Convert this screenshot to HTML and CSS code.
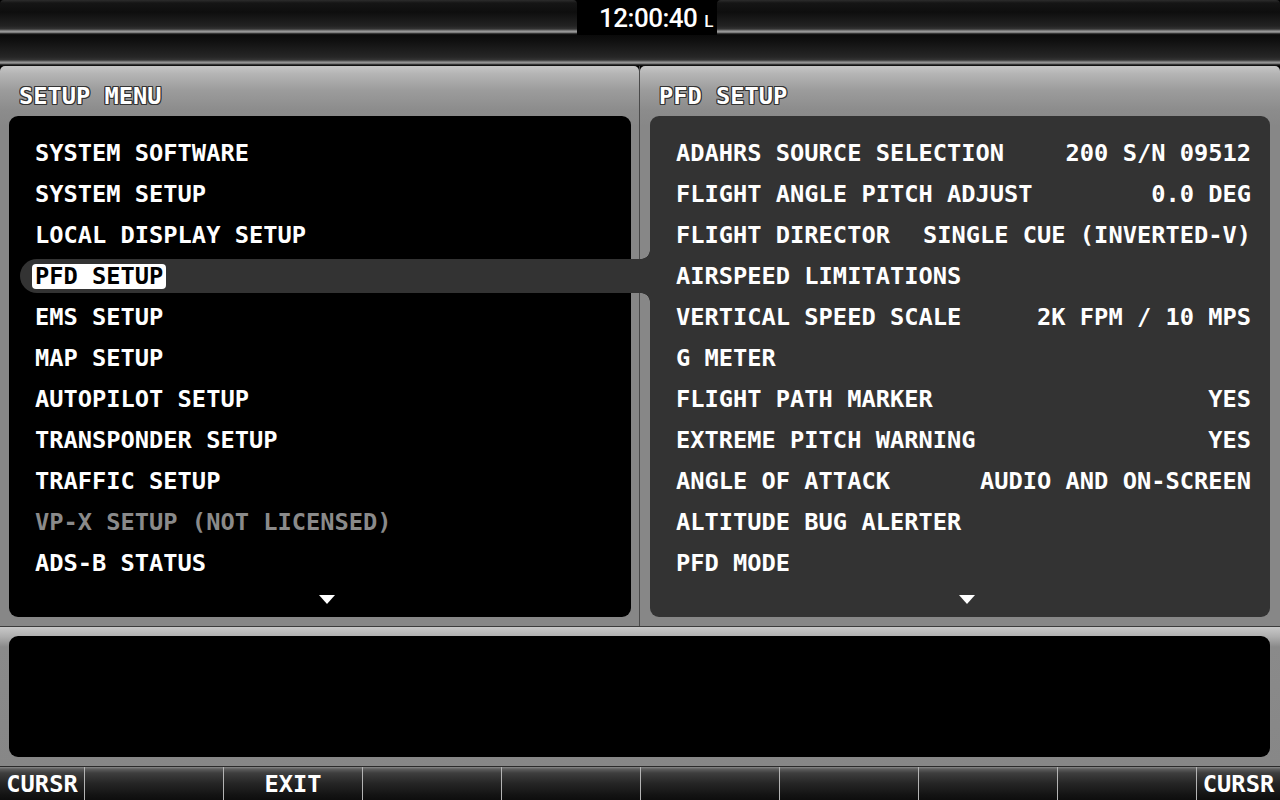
FILE: index.html
```html
<!DOCTYPE html>
<html lang="en">
<head>
    <meta charset="UTF-8">
    <meta name="viewport" content="width=device-width, initial-scale=1.0">
    <link rel="stylesheet" href="styles.css">
    <title>Setup Menu</title>
</head>
<body>
    <div class="screen">
        <div class="top-bar">
            <div class="bar-fill bar-left"></div>
            <div class="clock">12:00:40<span class="clock-zone">L</span></div>
            <div class="bar-fill"></div>
        </div>
        <div class="sub-bar"></div>

        <div class="panels">
            <div class="panel panel-left">
                <div class="panel-title">SETUP MENU</div>
                <div class="panel-body menu-list">
                    <div class="row"><span class="label">SYSTEM SOFTWARE</span></div>
                    <div class="row"><span class="label">SYSTEM SETUP</span></div>
                    <div class="row"><span class="label">LOCAL DISPLAY SETUP</span></div>
                    <div class="row selected"><span class="label">PFD SETUP</span></div>
                    <div class="row"><span class="label">EMS SETUP</span></div>
                    <div class="row"><span class="label">MAP SETUP</span></div>
                    <div class="row"><span class="label">AUTOPILOT SETUP</span></div>
                    <div class="row"><span class="label">TRANSPONDER SETUP</span></div>
                    <div class="row"><span class="label">TRAFFIC SETUP</span></div>
                    <div class="row disabled"><span class="label">VP-X SETUP (NOT LICENSED)</span></div>
                    <div class="row"><span class="label">ADS-B STATUS</span></div>
                    <div class="more"><span class="arrow-down"></span></div>
                </div>
            </div>
            <div class="divider"></div>
            <div class="panel panel-right">
                <div class="panel-title">PFD SETUP</div>
                <div class="panel-body settings-list">
                    <div class="row setting"><span>ADAHRS SOURCE SELECTION</span><span>200 S/N 09512</span></div>
                    <div class="row setting"><span>FLIGHT ANGLE PITCH ADJUST</span><span>0.0 DEG</span></div>
                    <div class="row setting"><span>FLIGHT DIRECTOR</span><span>SINGLE CUE (INVERTED-V)</span></div>
                    <div class="row setting"><span>AIRSPEED LIMITATIONS</span><span></span></div>
                    <div class="row setting"><span>VERTICAL SPEED SCALE</span><span>2K FPM / 10 MPS</span></div>
                    <div class="row setting"><span>G METER</span><span></span></div>
                    <div class="row setting"><span>FLIGHT PATH MARKER</span><span>YES</span></div>
                    <div class="row setting"><span>EXTREME PITCH WARNING</span><span>YES</span></div>
                    <div class="row setting"><span>ANGLE OF ATTACK</span><span>AUDIO AND ON-SCREEN</span></div>
                    <div class="row setting"><span>ALTITUDE BUG ALERTER</span><span></span></div>
                    <div class="row setting"><span>PFD MODE</span><span></span></div>
                    <div class="more"><span class="arrow-down"></span></div>
                </div>
            </div>
        </div>

        <div class="message-area">
            <div class="message-box"></div>
        </div>

        <div class="softkeys">
            <div class="key">CURSR</div>
            <div class="key"></div>
            <div class="key">EXIT</div>
            <div class="key"></div>
            <div class="key"></div>
            <div class="key"></div>
            <div class="key"></div>
            <div class="key"></div>
            <div class="key"></div>
            <div class="key">CURSR</div>
        </div>
    </div>
</body>
</html>
```
FILE: styles.css
```css
body {
    margin: 0;
    background-color: #000;
    font-family: "DejaVu Sans Mono", monospace;
    font-weight: bold;
    color: #fff;
    overflow: hidden;
}

.screen {
    width: 1280px;
    height: 800px;
    display: flex;
    flex-direction: column;
}

/* top bars */
.top-bar {
    height: 35px;
    display: flex;
}

.bar-fill {
    flex: 1;
    border-radius: 4px 4px 0 0;
    background: linear-gradient(to bottom, #2c2c2c 0, #151515 3px, #0e0e0e 12px, #232323 26px, #333 29px, #8e8e8e 31px, #a0a0a0 32px, #5a5a5a 33px, #111 34px);
}

.bar-left {
    flex: 0 0 577px;
}

.clock {
    width: 140px;
    background-color: #000;
    display: flex;
    align-items: center;
    justify-content: center;
    font-family: Roboto, sans-serif;
    font-weight: 500;
    font-size: 26px;
    letter-spacing: -0.5px;
    padding-left: 18px;
    box-sizing: border-box;
}

.clock-zone {
    font-size: 17px;
    margin-left: 7px;
    margin-top: 6px;
}

.sub-bar {
    height: 31px;
    background: linear-gradient(to bottom, #0a0a0a 0, #101010 6px, #262626 22px, #343434 25px, #8a8a8a 27px, #9c9c9c 28px, #555 29px, #111 30px);
}

/* main panels */
.panels {
    height: 561px;
    display: flex;
    border-bottom: 1px solid #3c3c3c;
    box-sizing: border-box;
}

.panel {
    display: flex;
    flex-direction: column;
    border-radius: 5px 5px 0 0;
    background: linear-gradient(to bottom, #c6c6c6 0, #b4b4b4 8px, #9c9c9c 24px, #8c8c8c 44px, #878787 60px, #878787 100%);
}

.panel-left {
    width: 639px;
    padding: 0 8px 9px 9px;
    box-sizing: border-box;
}

.panel-right {
    flex: 1;
    padding: 0 10px 9px 10px;
}

.divider {
    width: 1px;
    background-color: #4a4a4a;
}

.panel-title {
    height: 50px;
    box-sizing: border-box;
    padding: 17px 0 0 10px;
    line-height: 26px;
    font-size: 23.7px;
    text-shadow: -1px -1px 0 #333, 1px -1px 0 #333, -1px 1px 0 #333, 1px 1px 0 #333,
        0 -1px 0 #333, 0 1px 0 #333, -1px 0 0 #333, 1px 0 0 #333;
}

.panel-right .panel-title {
    padding-left: 9px;
}

.panel-body {
    flex: 1;
    border-radius: 9px;
    padding-top: 20px;
    font-size: 23.7px;
}

.menu-list {
    background-color: #000;
}

.settings-list {
    background-color: #333;
}

.row {
    height: 34px;
    margin-bottom: 7px;
    display: flex;
    align-items: center;
    line-height: 34px;
    white-space: pre;
}

.menu-list .row {
    margin-left: 11px;
    padding-left: 12px;
    border-radius: 17px 0 0 17px;
}

.label {
    height: 25px;
    line-height: 25px;
    padding: 0 3px;
    border-radius: 4px;
}

.row.disabled {
    color: #8a8a8a;
}

.row.selected {
    position: relative;
    z-index: 1;
    background-color: #333;
    margin-right: -19px;
}

.row.selected::before,
.row.selected::after {
    content: "";
    position: absolute;
    right: 0;
    width: 9px;
    height: 9px;
}

.row.selected::before {
    top: -9px;
    background: radial-gradient(circle at 0 0, transparent 8.5px, #333 9px);
}

.row.selected::after {
    bottom: -9px;
    background: radial-gradient(circle at 0 100%, transparent 8.5px, #333 9px);
}

.row.selected .label {
    background-color: #fff;
    color: #000;
}

.setting {
    justify-content: space-between;
    padding: 0 19px 0 26px;
}

.more {
    margin-top: 12px;
    padding-left: 14px;
    text-align: center;
    line-height: 9px;
}

.arrow-down {
    display: inline-block;
    width: 0;
    height: 0;
    border-left: 8px solid transparent;
    border-right: 8px solid transparent;
    border-top: 9px solid #fff;
}

/* message area */
.message-area {
    height: 140px;
    box-sizing: border-box;
    padding: 9px 10px 10px 9px;
    border-bottom: 1px solid #2a2a2a;
    background: linear-gradient(to bottom, #c8c8c8 0, #b0b0b0 9px, #8a8a8a 20px, #878787 100%);
}

.message-box {
    height: 121px;
    background-color: #000;
    border-radius: 9px;
}

/* softkeys */
.softkeys {
    height: 33px;
    display: grid;
    grid-template-columns: 84px repeat(8, 1fr) 84px;
}

.key {
    border-left: 1px solid #b4b4b4;
    background: linear-gradient(to bottom, #8a8a8a 0, #5e5e5e 2px, #3e3e3e 6px, #262626 16px, #131313 28px, #0c0c0c 100%);
    font-size: 23.7px;
    line-height: 34px;
    text-align: center;
}

.key:first-child {
    border-left: none;
}
```
